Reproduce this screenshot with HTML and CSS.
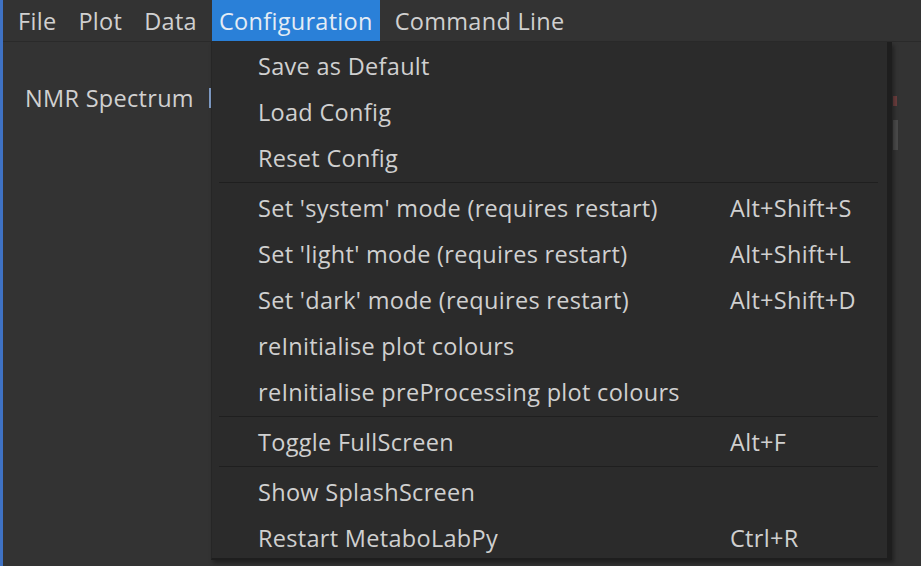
FILE: index.html
```html
<!DOCTYPE html>
<html>
<head>
<meta charset="utf-8">
<link rel="stylesheet" href="styles.css">
</head>
<body>
<div class="window">
  <div class="menubar">
    <span class="mb-item">File</span>
    <span class="mb-item">Plot</span>
    <span class="mb-item">Data</span>
    <span class="mb-item active">Configuration</span>
    <span class="mb-item">Command Line</span>
  </div>
  <div class="content">
    <div class="side">
      <div class="label">NMR Spectrum</div>
    </div>
    <div class="main">
      <div class="field"></div>
    </div>
    <div class="vscroll"><div class="mark"></div><div class="handle"></div></div>
  </div>

  <div class="dropdown">
    <div class="item"><span class="txt">Save as Default</span></div>
    <div class="item"><span class="txt">Load Config</span></div>
    <div class="item"><span class="txt">Reset Config</span></div>
    <div class="sep"></div>
    <div class="item"><span class="txt">Set 'system' mode (requires restart)</span><span class="key">Alt+Shift+S</span></div>
    <div class="item"><span class="txt">Set 'light' mode (requires restart)</span><span class="key">Alt+Shift+L</span></div>
    <div class="item"><span class="txt">Set 'dark' mode (requires restart)</span><span class="key">Alt+Shift+D</span></div>
    <div class="item"><span class="txt">reInitialise plot colours</span></div>
    <div class="item"><span class="txt">reInitialise preProcessing plot colours</span></div>
    <div class="sep"></div>
    <div class="item"><span class="txt">Toggle FullScreen</span><span class="key">Alt+F</span></div>
    <div class="sep"></div>
    <div class="item"><span class="txt">Show SplashScreen</span></div>
    <div class="item"><span class="txt">Restart MetaboLabPy</span><span class="key">Ctrl+R</span></div>
  </div>
</div>
</body>
</html>
```

FILE: styles.css
```css
html, body {
  margin: 0;
  padding: 0;
  background: #333333;
  overflow: hidden;
}
.window {
  position: relative;
  width: 921px;
  height: 566px;
  background: #333333;
  border-left: 3px solid #3f72c4;
  box-sizing: border-box;
  display: flex;
  flex-direction: column;
  font-family: "Open Sans", "Noto Sans", sans-serif;
  font-size: 23.5px;
  letter-spacing: 0.3px;
  color: #d0d0d0;
}
.menubar {
  height: 41px;
  flex: none;
  display: flex;
  align-items: stretch;
  padding-left: 4px;
  border-bottom: 1px solid #2a2a2a;
}
.mb-item {
  display: flex;
  align-items: center;
  padding: 0 7px;
  margin: 0 4px;
}
.mb-item.active {
  background: #2a80d8;
  color: #e4ecf5;
}
.content {
  flex: 1;
  display: flex;
}
.side {
  width: 206px;
  flex: none;
  padding: 40px 0 0 22px;
  box-sizing: border-box;
}
.main {
  flex: 1;
  padding-top: 46px;
}
.field {
  width: 30px;
  height: 20px;
  border-left: 2px solid #7f9cc6;
}
.vscroll {
  width: 28px;
  flex: none;
  position: relative;
  background: #333333;
}
.mark {
  position: absolute;
  left: 0;
  top: 54px;
  width: 4px;
  height: 10px;
  background: #6b3e3e;
}
.handle {
  position: absolute;
  left: 0;
  top: 78px;
  width: 5px;
  height: 30px;
  background: #4a4a4a;
}
.dropdown {
  position: absolute;
  left: 208px;
  top: 42px;
  width: 681px;
  padding: 1px 0 0 0;
  height: 518px;
  box-sizing: border-box;
  background: #2b2b2b;
  border-left: 1px solid #262626;
  border-right: 5px solid #1e1e1e;
  border-bottom: 2px solid #1e1e1e;
  box-shadow: 2px 3px 4px rgba(0,0,0,0.35);
  color: #d0d0d0;
}
.item {
  height: 46px;
  display: flex;
  align-items: center;
  padding-left: 46px;
}
.txt {
  width: 472px;
  flex: none;
}
.sep {
  height: 1px;
  margin: 1px 9px 2px 7px;
  background: #1f1f1f;
}
```
